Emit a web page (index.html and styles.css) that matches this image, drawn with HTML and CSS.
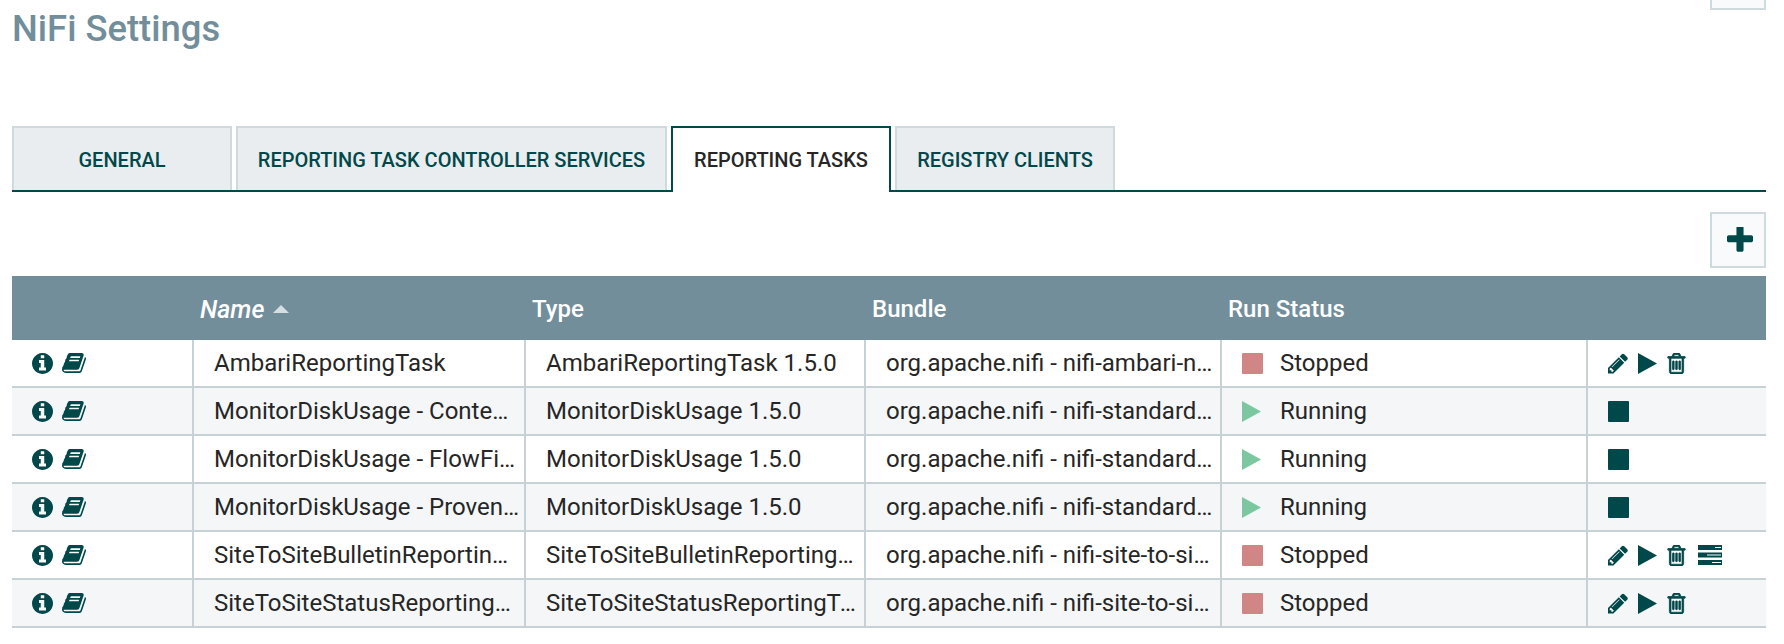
FILE: index.html
```html
<!DOCTYPE html>
<html lang="en">
  <head>
    <meta charset="UTF-8" />
    <title>NiFi Settings</title>
    <link rel="stylesheet" href="styles.css">
  </head>
  <body>
    <svg class="defs" xmlns="http://www.w3.org/2000/svg">
      <symbol id="i-info" viewBox="0 128 1536 1536"><path d="M1024 1376v-160q0-14-9-23t-23-9h-96v-512q0-14-9-23t-23-9h-320q-14 0-23 9t-9 23v160q0 14 9 23t23 9h96v320h-96q-14 0-23 9t-9 23v160q0 14 9 23t23 9h448q14 0 23-9t9-23zm-128-896v-160q0-14-9-23t-23-9h-192q-14 0-23 9t-9 23v160q0 14 9 23t23 9h192q14 0 23-9t9-23zm640 416q0 209-103 385.5t-279.5 279.5-385.5 103-385.5-103-279.5-279.5-103-385.5 103-385.5 279.5-279.5 385.5-103 385.5 103 279.5 279.5 103 385.5z"/></symbol>
      <symbol id="i-book" viewBox="64 128 1664 1536" preserveAspectRatio="none"><path d="M1703 478q40 57 18 129l-275 906q-19 64-76.5 107.5t-122.5 43.5h-923q-77 0-148.5-53.5t-99.5-131.5q-24-67-2-127 0-4 3-27t4-37q1-8-3-21.5t-3-19.5q2-11 8-21t16.5-23.5 16.5-23.5q23-38 45-91.5t30-91.5q3-10 .5-30t-.5-28q3-11 17-28t17-23q21-36 42-92t25-90q1-9-2.5-32t.5-28q4-13 22-30.5t22-22.5q19-26 42.5-84.5t27.5-96.5q1-8-3-25.5t-2-26.5q2-8 9-18t18-23 17-21q8-12 16.5-30.5t15-35 16-36 19.5-32 26.5-23.5 36-11.5 47.5 5.5l-1 3q38-9 51-9h761q74 0 114 56t18 130l-274 906q-36 119-71.5 153.5t-128.5 34.5h-869q-27 0-38 15-11 16-1 43 24 70 144 70h923q29 0 56-15.5t35-41.5l300-987q7-22 5-57 38 15 59 43zm-1064 2q-4 13 2 22.5t20 9.5h608q13 0 25.5-9.5t16.5-22.5l21-64q4-13-2-22.5t-20-9.5h-608q-13 0-25.5 9.5t-16.5 22.5zm-83 256q-4 13 2 22.5t20 9.5h608q13 0 25.5-9.5t16.5-22.5l21-64q4-13-2-22.5t-20-9.5h-608q-13 0-25.5 9.5t-16.5 22.5z"/></symbol>
      <symbol id="i-pencil" viewBox="128 128 1536 1536"><path d="M491 1536l91-91-235-235-91 91v107h128v128h107zm523-928q0-22-22-22-10 0-17 7l-542 542q-7 7-7 17 0 22 22 22 10 0 17-7l542-542q7-7 7-17zm-54-192l416 416-832 832h-416v-416zm683 96q0 53-37 90l-166 166-416-416 166-165q36-38 90-38 53 0 91 38l235 234q37 39 37 91z"/></symbol>
      <symbol id="i-trash" viewBox="128 128 1536 1536" preserveAspectRatio="none"><path d="M704 736v576q0 14-9 23t-23 9h-64q-14 0-23-9t-9-23v-576q0-14 9-23t23-9h64q14 0 23 9t9 23zm256 0v576q0 14-9 23t-23 9h-64q-14 0-23-9t-9-23v-576q0-14 9-23t23-9h64q14 0 23 9t9 23zm256 0v576q0 14-9 23t-23 9h-64q-14 0-23-9t-9-23v-576q0-14 9-23t23-9h64q14 0 23 9t9 23zm128 724v-948h-896v948q0 22 7 40.5t14.5 27 10.5 8.5h832q3 0 10.5-8.5t14.5-27 7-40.5zm-672-1076h448l-48-117q-7-9-17-11h-317q-10 2-17 11zm928 32v64q0 14-9 23t-23 9h-96v948q0 83-47 143.5t-113 60.5h-832q-66 0-113-58.5t-47-141.5v-952h-96q-14 0-23-9t-9-23v-64q0-14 9-23t23-9h309l70-167q15-37 54-63t79-26h320q40 0 79 26t54 63l70 167h309q14 0 23 9t9 23z"/></symbol>
      <symbol id="i-plus" viewBox="192 192 1408 1408"><path d="M1600 736v192q0 40-28 68t-68 28h-416v416q0 40-28 68t-68 28h-192q-40 0-68-28t-28-68v-416h-416q-40 0-68-28t-28-68v-192q0-40 28-68t68-28h416v-416q0-40 28-68t68-28h192q40 0 68 28t28 68v416h416q40 0 68 28t28 68z"/></symbol>
      <symbol id="i-play" viewBox="0 0 19 21"><path d="M0 0L19 10.5L0 21z"/></symbol>
      <symbol id="i-stop" viewBox="0 0 21 21"><rect width="21" height="21" rx="1"/></symbol>
      <symbol id="i-services" viewBox="0 0 24 20"><path fill-rule="evenodd" d="M0 0h24v5H0zM17 2v1h6V2zM0 7.500h24v5H0zM9 9.500v1h14v-1zM0 15h24v5H0zM14 17v1h9v-1z"/></symbol>
    </svg>

    <div class="page-head">
      <h1>NiFi Settings</h1>
      <div class="help-btn"></div>
    </div>

    <div class="tabs">
      <div class="tab tab-general">GENERAL</div>
      <div class="tab tab-services">REPORTING TASK CONTROLLER SERVICES</div>
      <div class="tab tab-active">REPORTING TASKS</div>
      <div class="tab tab-registry">REGISTRY CLIENTS</div>
    </div>

    <div class="toolbar">
      <div class="add-btn"><svg class="plus"><use href="#i-plus"/></svg></div>
    </div>

    <div class="grid">
      <div class="row head">
        <div class="col c-more"></div>
        <div class="col c-name"><em>Name</em><span class="sort"></span></div>
        <div class="col c-type">Type</div>
        <div class="col c-bundle">Bundle</div>
        <div class="col c-status">Run Status</div>
        <div class="col c-actions"></div>
      </div>

      <div class="row">
        <div class="col c-more"><svg class="ic info"><use href="#i-info"/></svg><svg class="ic book"><use href="#i-book"/></svg></div>
        <div class="col c-name"><span class="txt">AmbariReportingTask</span></div>
        <div class="col c-type"><span class="txt">AmbariReportingTask 1.5.0</span></div>
        <div class="col c-bundle"><span class="txt">org.apache.nifi - nifi-ambari-nar</span></div>
        <div class="col c-status"><svg class="state stopped"><use href="#i-stop"/></svg><span class="txt">Stopped</span></div>
        <div class="col c-actions"><svg class="ic pencil"><use href="#i-pencil"/></svg><svg class="ic play"><use href="#i-play"/></svg><svg class="ic trash"><use href="#i-trash"/></svg></div>
      </div>

      <div class="row alt">
        <div class="col c-more"><svg class="ic info"><use href="#i-info"/></svg><svg class="ic book"><use href="#i-book"/></svg></div>
        <div class="col c-name"><span class="txt">MonitorDiskUsage - Content Repository</span></div>
        <div class="col c-type"><span class="txt">MonitorDiskUsage 1.5.0</span></div>
        <div class="col c-bundle"><span class="txt">org.apache.nifi - nifi-standard-nar</span></div>
        <div class="col c-status"><svg class="state running"><use href="#i-play"/></svg><span class="txt">Running</span></div>
        <div class="col c-actions"><svg class="ic stop"><use href="#i-stop"/></svg></div>
      </div>

      <div class="row">
        <div class="col c-more"><svg class="ic info"><use href="#i-info"/></svg><svg class="ic book"><use href="#i-book"/></svg></div>
        <div class="col c-name"><span class="txt">MonitorDiskUsage - FlowFile Repository</span></div>
        <div class="col c-type"><span class="txt">MonitorDiskUsage 1.5.0</span></div>
        <div class="col c-bundle"><span class="txt">org.apache.nifi - nifi-standard-nar</span></div>
        <div class="col c-status"><svg class="state running"><use href="#i-play"/></svg><span class="txt">Running</span></div>
        <div class="col c-actions"><svg class="ic stop"><use href="#i-stop"/></svg></div>
      </div>

      <div class="row alt">
        <div class="col c-more"><svg class="ic info"><use href="#i-info"/></svg><svg class="ic book"><use href="#i-book"/></svg></div>
        <div class="col c-name"><span class="txt">MonitorDiskUsage - Provenance Repository</span></div>
        <div class="col c-type"><span class="txt">MonitorDiskUsage 1.5.0</span></div>
        <div class="col c-bundle"><span class="txt">org.apache.nifi - nifi-standard-nar</span></div>
        <div class="col c-status"><svg class="state running"><use href="#i-play"/></svg><span class="txt">Running</span></div>
        <div class="col c-actions"><svg class="ic stop"><use href="#i-stop"/></svg></div>
      </div>

      <div class="row">
        <div class="col c-more"><svg class="ic info"><use href="#i-info"/></svg><svg class="ic book"><use href="#i-book"/></svg></div>
        <div class="col c-name"><span class="txt">SiteToSiteBulletinReportingTask</span></div>
        <div class="col c-type"><span class="txt">SiteToSiteBulletinReportingTask 1.5.0</span></div>
        <div class="col c-bundle"><span class="txt">org.apache.nifi - nifi-site-to-site-reporting-nar</span></div>
        <div class="col c-status"><svg class="state stopped"><use href="#i-stop"/></svg><span class="txt">Stopped</span></div>
        <div class="col c-actions"><svg class="ic pencil"><use href="#i-pencil"/></svg><svg class="ic play"><use href="#i-play"/></svg><svg class="ic trash"><use href="#i-trash"/></svg><svg class="ic services"><use href="#i-services"/></svg></div>
      </div>

      <div class="row alt">
        <div class="col c-more"><svg class="ic info"><use href="#i-info"/></svg><svg class="ic book"><use href="#i-book"/></svg></div>
        <div class="col c-name"><span class="txt">SiteToSiteStatusReportingTask</span></div>
        <div class="col c-type"><span class="txt">SiteToSiteStatusReportingTask 1.5.0</span></div>
        <div class="col c-bundle"><span class="txt">org.apache.nifi - nifi-site-to-site-reporting-nar</span></div>
        <div class="col c-status"><svg class="state stopped"><use href="#i-stop"/></svg><span class="txt">Stopped</span></div>
        <div class="col c-actions"><svg class="ic pencil"><use href="#i-pencil"/></svg><svg class="ic play"><use href="#i-play"/></svg><svg class="ic trash"><use href="#i-trash"/></svg></div>
      </div>
    </div>
  </body>
</html>
```

FILE: styles.css
```css
body {
  margin: 0;
  padding: 0 18px 0 12px;
  background-color: #fff;
  color: #262626;
  font-family: Roboto, sans-serif;
}

.defs {
  display: none;
}

svg {
  fill: #004849;
  flex: none;
}

.page-head {
  height: 126px;
  display: flex;
  justify-content: space-between;
  align-items: flex-start;
}

.page-head h1 {
  margin: 8px 0 0;
  font-size: 36.4px;
  line-height: 42px;
  font-weight: 500;
  color: #728e9b;
}

.help-btn {
  width: 56px;
  height: 10px;
  box-sizing: border-box;
  border: 2px solid #cfdadd;
  border-top: none;
  background-color: #f8fafb;
}

.tabs {
  height: 66px;
  box-sizing: border-box;
  display: flex;
  align-items: flex-start;
  gap: 4px;
  border-bottom: 2px solid #004849;
}

.tab {
  height: 64px;
  box-sizing: border-box;
  display: flex;
  align-items: center;
  justify-content: center;
  padding-top: 1px;
  border: 2px solid #cfdadd;
  border-bottom: none;
  background-color: #e9edf0;
  color: #004849;
  font-size: 20px;
  font-weight: 500;
}

.tab-general {
  width: 220px;
}

.tab-services {
  width: 431px;
}

.tab-registry {
  width: 220px;
}

.tab-active {
  width: 220px;
  height: 66px;
  padding-bottom: 2px;
  border: 2px solid #004849;
  border-bottom: none;
  background-color: #fff;
  color: #262626;
}

.toolbar {
  height: 84px;
  padding-top: 20px;
  box-sizing: border-box;
  display: flex;
  justify-content: flex-end;
}

.add-btn {
  width: 56px;
  height: 56px;
  box-sizing: border-box;
  display: flex;
  align-items: center;
  justify-content: center;
  padding-left: 4px;
  border: 2px solid #cfdadd;
  background-color: #f8fafb;
}

.plus {
  width: 26px;
  height: 26px;
}

.row {
  height: 48px;
  box-sizing: border-box;
  display: flex;
  border-bottom: 2px solid #c7d2d7;
  font-size: 24px;
}

.row.alt {
  background-color: #f4f6f8;
}

.row.head {
  height: 64px;
  border-bottom: none;
  background-color: #728e9b;
  color: #fff;
  font-weight: 500;
  font-size: 24px;
}

.head em {
  font-size: 25px;
}

.col {
  box-sizing: border-box;
  display: flex;
  align-items: center;
  border-right: 2px solid #c7d2d7;
  overflow: hidden;
}

.head .col {
  border-right: none;
}

.txt {
  overflow: hidden;
  white-space: nowrap;
  text-overflow: ellipsis;
}

.c-more {
  width: 182px;
  padding-left: 20px;
  gap: 9px;
}

.c-name {
  width: 332px;
  padding: 0 4px 0 20px;
}

.c-type {
  width: 340px;
  padding: 0 6px 0 20px;
}

.c-bundle {
  width: 356px;
  padding: 0 4px 0 20px;
}

.c-status {
  width: 366px;
  padding: 0 12px 0 20px;
}

.c-actions {
  flex: 1;
  padding-left: 20px;
  gap: 10px;
  border-right: none;
}

.head .c-name,
.head .c-type,
.head .c-bundle,
.head .c-status {
  padding: 2px 0 0 6px;
}

.sort {
  width: 0;
  height: 0;
  margin-left: 9px;
  border-left: 8px solid transparent;
  border-right: 8px solid transparent;
  border-bottom: 8px solid #d5dfe3;
}

.state {
  width: 21px;
  height: 21px;
  margin-right: 17px;
}

.state.stopped {
  fill: #d18686;
}

.state.running {
  fill: #7dc7a0;
  width: 19px;
  margin-right: 19px;
}

.ic {
  height: 21px;
  width: 21px;
}

.book {
  width: 24px;
  height: 20px;
}

.pencil {
  width: 20px;
}

.play {
  width: 19px;
}

.trash {
  width: 19px;
  stroke: #004849;
  stroke-width: 60;
}

.services {
  width: 24px;
  height: 20px;
  margin-left: 2px;
}
```
